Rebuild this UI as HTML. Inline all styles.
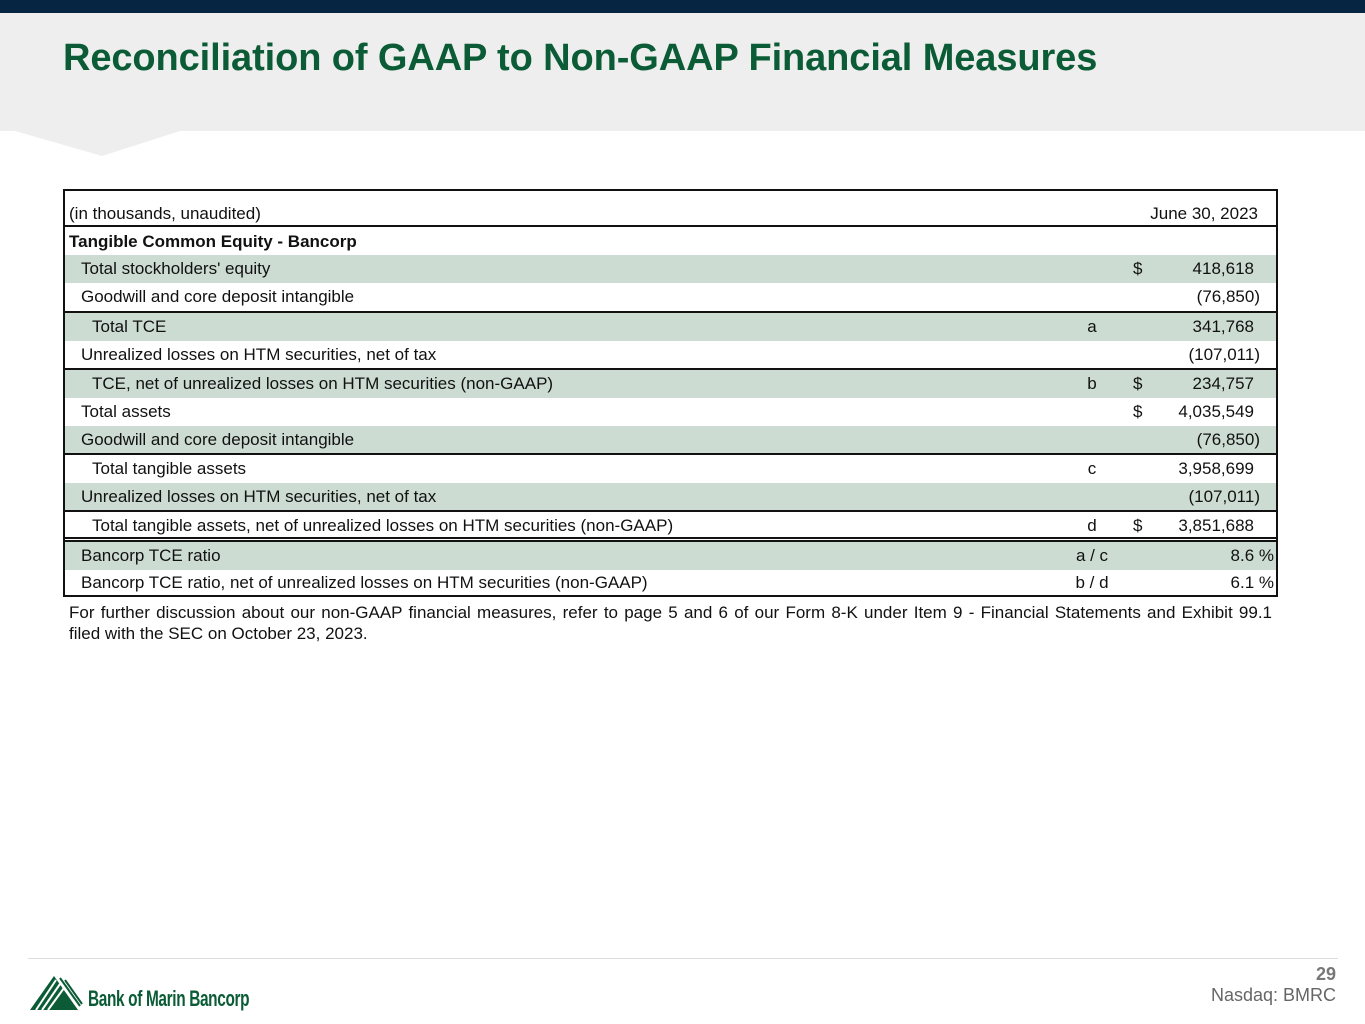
<!DOCTYPE html>
<html><head><meta charset="utf-8"><style>
*{margin:0;padding:0;box-sizing:border-box}
body{width:1365px;height:1024px;position:relative;background:#fff;font-family:"Liberation Sans",Arial,sans-serif;overflow:hidden;color:#111}
.top{position:absolute;left:0;top:0;width:1365px;height:13px;background:#062543}
.band{position:absolute;left:0;top:13px;width:1365px;height:118px;background:#eeeeee}
.title{position:absolute;left:63px;top:37px;font-size:38px;font-weight:bold;color:#0b5c36;white-space:nowrap;letter-spacing:-0.1px}
.tbl{position:absolute;left:63px;top:189px;width:1215px;height:408px;border:2px solid #111}
.r{position:absolute;left:0;width:1211px;height:28px;font-size:17px;line-height:28px;white-space:nowrap}
.g{background:#cddcd3}
.r span{position:absolute;top:0}
.l1{left:16px}.l2{left:27px}.l0{left:4px}
.c{left:1008px;width:38px;text-align:center}
.d{left:1068px}
.v{right:22px}
.p{right:16px}
.pc{right:2px}
.ln{position:absolute;left:0;width:1211px;height:2px;background:#111}
.foot{position:absolute;left:69px;top:602px;width:1203px;font-size:17px;line-height:21px;white-space:nowrap}
.j{text-align:justify;text-align-last:justify;white-space:normal}
.hr{position:absolute;left:28px;top:958px;width:1310px;height:1px;background:#ddd}
.pg{position:absolute;right:29px;top:964px;font-size:18px;font-weight:bold;color:#777}
.nq{position:absolute;right:29px;top:985px;font-size:18px;color:#666}
.logo{position:absolute;left:88px;top:986px;font-size:22px;font-weight:bold;color:#0b5c36;font-family:"Liberation Sans Narrow","Liberation Sans",sans-serif;transform:scaleX(.7);transform-origin:left;letter-spacing:-0.5px}
</style></head><body>
<div class="top"></div>
<div class="band"></div>
<svg style="position:absolute;left:0;top:130px" width="200" height="28"><polygon points="15,1 180,1 102,26" fill="#eeeeee"/></svg>
<div class="title">Reconciliation of GAAP to Non-GAAP Financial Measures</div>
<div class="tbl">
<div class="r" style="top:9px"><span class="l0">(in thousands, unaudited)</span><span style="right:18px">June 30, 2023</span></div>
<div class="ln" style="top:34px"></div>
<div class="r" style="top:37px"><span class="l0" style="font-weight:bold">Tangible Common Equity - Bancorp</span></div>
<div class="r g" style="top:64px"><span class="l1">Total stockholders' equity</span><span class="d">$</span><span class="v">418,618</span></div>
<div class="r" style="top:92px"><span class="l1">Goodwill and core deposit intangible</span><span class="p">(76,850)</span></div>
<div class="ln" style="top:120px"></div>
<div class="r g" style="top:122px"><span class="l2">Total TCE</span><span class="c">a</span><span class="v">341,768</span></div>
<div class="r" style="top:150px"><span class="l1">Unrealized losses on HTM securities, net of tax</span><span class="p">(107,011)</span></div>
<div class="ln" style="top:177px"></div>
<div class="r g" style="top:179px"><span class="l2">TCE, net of unrealized losses on HTM securities (non-GAAP)</span><span class="c">b</span><span class="d">$</span><span class="v">234,757</span></div>
<div class="r" style="top:207px"><span class="l1">Total assets</span><span class="d">$</span><span class="v">4,035,549</span></div>
<div class="r g" style="top:235px"><span class="l1">Goodwill and core deposit intangible</span><span class="p">(76,850)</span></div>
<div class="ln" style="top:262px"></div>
<div class="r" style="top:264px"><span class="l2">Total tangible assets</span><span class="c">c</span><span class="v">3,958,699</span></div>
<div class="r g" style="top:292px"><span class="l1">Unrealized losses on HTM securities, net of tax</span><span class="p">(107,011)</span></div>
<div class="ln" style="top:319px"></div>
<div class="r" style="top:321px"><span class="l2">Total tangible assets, net of unrealized losses on HTM securities (non-GAAP)</span><span class="c">d</span><span class="d">$</span><span class="v">3,851,688</span></div>
<div class="ln" style="top:346px"></div>
<div class="ln" style="top:349px"></div>
<div class="r g" style="top:351px"><span class="l1">Bancorp TCE ratio</span><span class="c">a / c</span><span class="pc">8.6 %</span></div>
<div class="r" style="top:378px"><span class="l1">Bancorp TCE ratio, net of unrealized losses on HTM securities (non-GAAP)</span><span class="c">b / d</span><span class="pc">6.1 %</span></div>
</div>
<div class="foot"><div class="j">For further discussion about our non-GAAP financial measures, refer to page 5 and 6 of our Form 8-K under Item 9 - Financial Statements and Exhibit 99.1</div><div>filed with the SEC on October 23, 2023.</div></div>
<div class="hr"></div>
<svg style="position:absolute;left:30px;top:974px" width="55" height="38"><polygon points="0,36 24,2 48,36" fill="#0b5c36"/><g stroke="#fff" stroke-width="2"><line x1="6" y1="36" x2="26" y2="6"/><line x1="12" y1="36" x2="30" y2="10"/><line x1="18" y1="36" x2="34" y2="14"/></g><g stroke="#0b5c36" stroke-width="2"><line x1="30" y1="4" x2="50" y2="32"/><line x1="35" y1="6" x2="52" y2="30"/></g></svg>
<div class="logo">Bank of Marin Bancorp</div>
<div class="pg">29</div>
<div class="nq">Nasdaq: BMRC</div>
</body></html>
